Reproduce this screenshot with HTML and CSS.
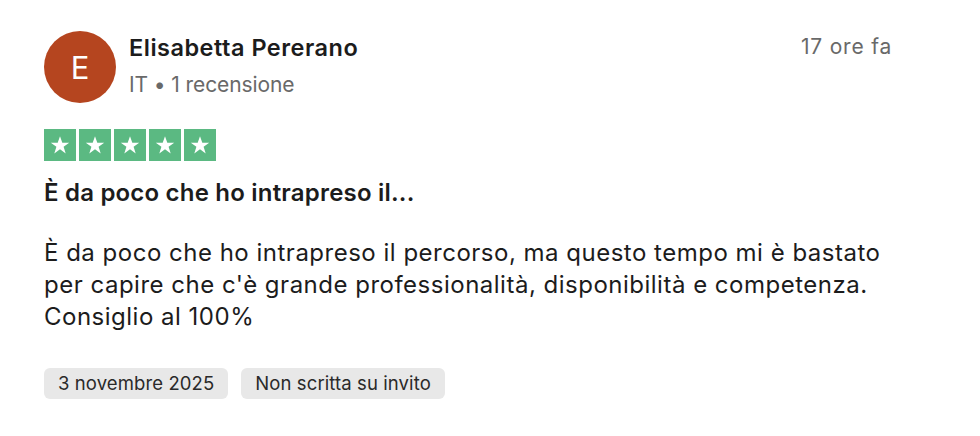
FILE: index.html
```html
<!DOCTYPE html>
<html lang="it">
<head>
<meta charset="utf-8">
<link rel="stylesheet" href="styles.css">
</head>
<body>
<article class="review">
  <header class="head">
    <div class="avatar">E</div>
    <div class="who">
      <div class="name">Elisabetta Pererano</div>
      <div class="meta">IT • 1 recensione</div>
    </div>
    <div class="time">17 ore fa</div>
  </header>
  <div class="stars">
    <span class="star"><svg viewBox="0 0 24 24"><path d="M12 3.2l2.3 6.5h6.9l-5.6 4.1 2.1 6.6L12 16.3l-5.7 4.1 2.1-6.6-5.6-4.1h6.9z"/></svg></span>
    <span class="star"><svg viewBox="0 0 24 24"><path d="M12 3.2l2.3 6.5h6.9l-5.6 4.1 2.1 6.6L12 16.3l-5.7 4.1 2.1-6.6-5.6-4.1h6.9z"/></svg></span>
    <span class="star"><svg viewBox="0 0 24 24"><path d="M12 3.2l2.3 6.5h6.9l-5.6 4.1 2.1 6.6L12 16.3l-5.7 4.1 2.1-6.6-5.6-4.1h6.9z"/></svg></span>
    <span class="star"><svg viewBox="0 0 24 24"><path d="M12 3.2l2.3 6.5h6.9l-5.6 4.1 2.1 6.6L12 16.3l-5.7 4.1 2.1-6.6-5.6-4.1h6.9z"/></svg></span>
    <span class="star"><svg viewBox="0 0 24 24"><path d="M12 3.2l2.3 6.5h6.9l-5.6 4.1 2.1 6.6L12 16.3l-5.7 4.1 2.1-6.6-5.6-4.1h6.9z"/></svg></span>
  </div>
  <h2 class="title">È da poco che ho intrapreso il...</h2>
  <p class="body">È da poco che ho intrapreso il percorso, ma questo tempo mi è bastato per capire che c'è grande professionalità, disponibilità e competenza. Consiglio al 100%</p>
  <div class="tags">
    <span class="tag">3 novembre 2025</span>
    <span class="tag">Non scritta su invito</span>
  </div>
</article>
</body>
</html>
```
FILE: styles.css
```css
html, body {
  margin: 0;
  padding: 0;
  background: #ffffff;
}
body {
  font-family: Inter, "Noto Sans", sans-serif;
  color: #1c1c1c;
}
.review {
  padding: 31px 0 0 44px;
  width: 848px;
}
.head {
  display: flex;
  align-items: flex-start;
}
.avatar {
  width: 72px;
  height: 72px;
  border-radius: 50%;
  background: #b5451f;
  color: #ffffff;
  font-size: 31px;
  font-weight: 400;
  display: flex;
  align-items: center;
  justify-content: center;
  flex-shrink: 0;
}
.who {
  margin-left: 13px;
  padding-top: 3px;
  flex: 1;
}
.name {
  font-size: 23.5px;
  font-weight: 600;
  line-height: 28px;
  letter-spacing: 0.5px;
}
.meta {
  margin-top: 10px;
  font-size: 21px;
  line-height: 26px;
  color: #696969;
  letter-spacing: -0.1px;
}
.time {
  font-size: 21px;
  line-height: 26px;
  color: #696969;
  padding-top: 3px;
  letter-spacing: 0.8px;
}
.stars {
  display: flex;
  gap: 3px;
  margin-top: 26px;
}
.star {
  width: 32px;
  height: 32px;
  background: #5bb982;
  display: flex;
  align-items: center;
  justify-content: center;
}
.star svg {
  width: 24px;
  height: 24px;
  fill: #ffffff;
}
.title {
  margin: 18px 0 0;
  font-size: 24px;
  font-weight: 600;
  line-height: 28px;
  letter-spacing: 0.2px;
}
.body {
  margin: 30px 0 0;
  font-size: 24px;
  line-height: 32px;
  letter-spacing: 0.5px;
}
.tags {
  display: flex;
  gap: 13px;
  margin-top: 35px;
}
.tag {
  background: #e8e8e8;
  border-radius: 6px;
  padding: 0 14px;
  height: 31px;
  line-height: 30px;
  font-size: 18.5px;
  color: #2a2a2a;
  letter-spacing: 0.1px;
}
```
